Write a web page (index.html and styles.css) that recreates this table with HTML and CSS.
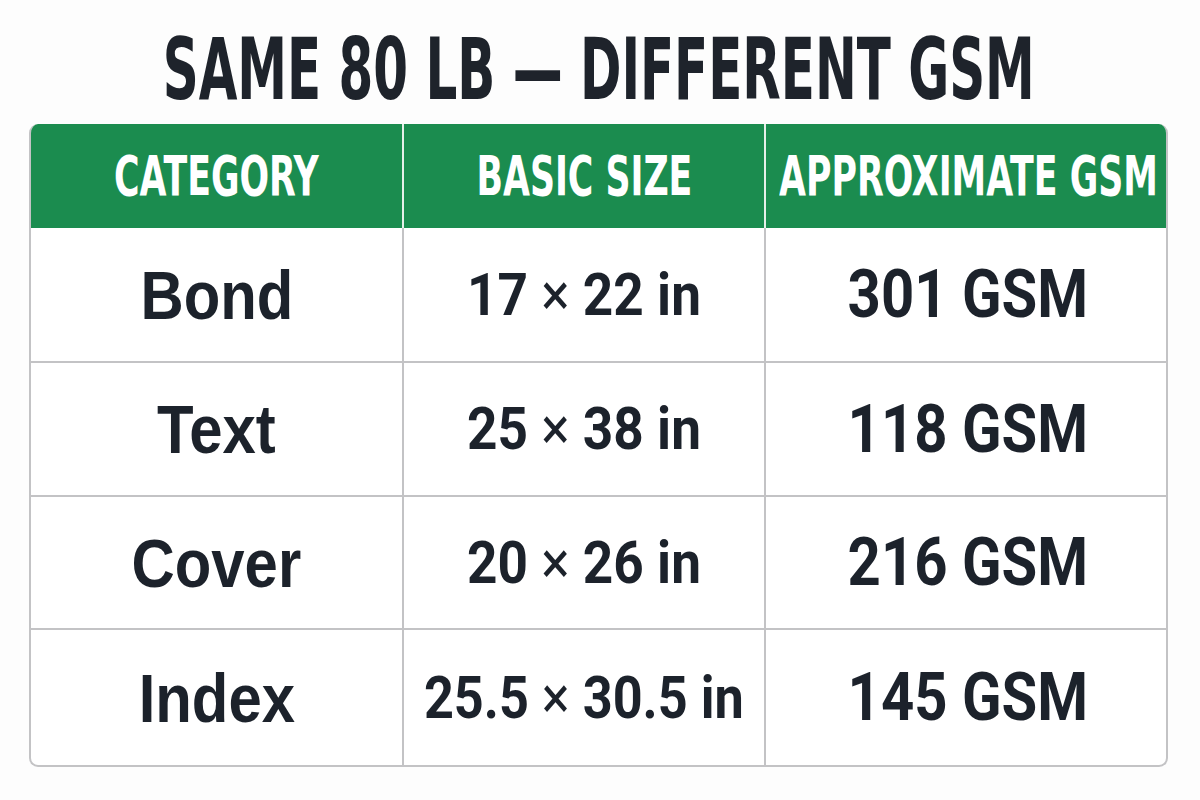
FILE: index.html
```html
<!DOCTYPE html>
<html>
<head>
<meta charset="utf-8">
<link rel="stylesheet" href="styles.css">
</head>
<body>
<div class="page">
  <h1 class="title"><span class="title-text">SAME 80 LB — DIFFERENT GSM</span></h1>
  <div class="table">
    <div class="cell head"><span class="head-text">CATEGORY</span></div>
    <div class="cell head"><span class="head-text">BASIC SIZE</span></div>
    <div class="cell head last"><span class="head-text">APPROXIMATE GSM</span></div>

    <div class="cell"><span class="name">Bond</span></div>
    <div class="cell"><span class="size">17 <span class="times">×</span> 22 in</span></div>
    <div class="cell last"><span class="gsm">301 GSM</span></div>

    <div class="cell"><span class="name">Text</span></div>
    <div class="cell"><span class="size">25 <span class="times">×</span> 38 in</span></div>
    <div class="cell last"><span class="gsm">118 GSM</span></div>

    <div class="cell"><span class="name">Cover</span></div>
    <div class="cell"><span class="size">20 <span class="times">×</span> 26 in</span></div>
    <div class="cell last"><span class="gsm">216 GSM</span></div>

    <div class="cell bottom"><span class="name">Index</span></div>
    <div class="cell bottom"><span class="size long">25.5 <span class="times">×</span> 30.5 in</span></div>
    <div class="cell last bottom"><span class="gsm">145 GSM</span></div>
  </div>
</div>
</body>
</html>
```
FILE: styles.css
```css
* { box-sizing: border-box; }
html, body { margin: 0; padding: 0; background: #fdfdfd; }
.page {
  width: 1200px;
  height: 800px;
  padding: 27px 0 0 29px;
  font-family: "Roboto", "Liberation Sans", sans-serif;
  color: #1c222b;
}
.title {
  margin: 0;
  height: 97px;
  width: 1139px;
  display: flex;
  justify-content: center;
  align-items: flex-start;
  font-family: "DejaVu Sans Condensed", "DejaVu Sans", sans-serif;
  font-weight: 700;
  font-size: 85px;
  line-height: 85px;
  color: #1e232b;
}
.title-text {
  display: inline-block;
  transform: scaleX(0.653);
  white-space: nowrap;
}
.table {
  display: grid;
  grid-template-columns: 373px 362px 404px;
  grid-template-rows: 104px 135px 134px 133px 135px;
  width: 1139px;
  border: 2px solid #c3c3c5;
  border-top: none;
  border-radius: 9px;
  overflow: hidden;
  background: #ffffff;
}
.cell {
  display: flex;
  align-items: center;
  justify-content: center;
  border-right: 2px solid #c3c3c5;
  border-bottom: 2px solid #c3c3c5;
  white-space: nowrap;
}
.cell.last { border-right: none; }
.cell.bottom { border-bottom: none; }
.head {
  background: #1b8c4f;
  border-right: 2px solid #e6efe9;
  border-bottom: none;
}
.head.last { border-right: none; }
.head-text {
  display: inline-block;
  color: #ffffff;
  font-family: "DejaVu Sans Condensed", "DejaVu Sans", sans-serif;
  font-weight: 700;
  font-size: 56px;
  line-height: 1;
  transform: scaleX(0.69);
}
.name, .size, .gsm {
  display: inline-block;
  font-weight: 700;
  line-height: 1;
}
.name {
  font-family: "Liberation Sans", "Roboto", sans-serif;
  font-size: 68px;
  transform: scaleX(0.88);
}
.size {
  font-family: "Roboto", sans-serif;
  font-size: 60px;
  transform: scaleX(0.886);
}
.size.long { transform: scaleX(0.87); }
.times { font-weight: 400; }
.gsm {
  font-family: "Roboto", sans-serif;
  font-size: 67px;
  transform: scaleX(0.866);
}
```
